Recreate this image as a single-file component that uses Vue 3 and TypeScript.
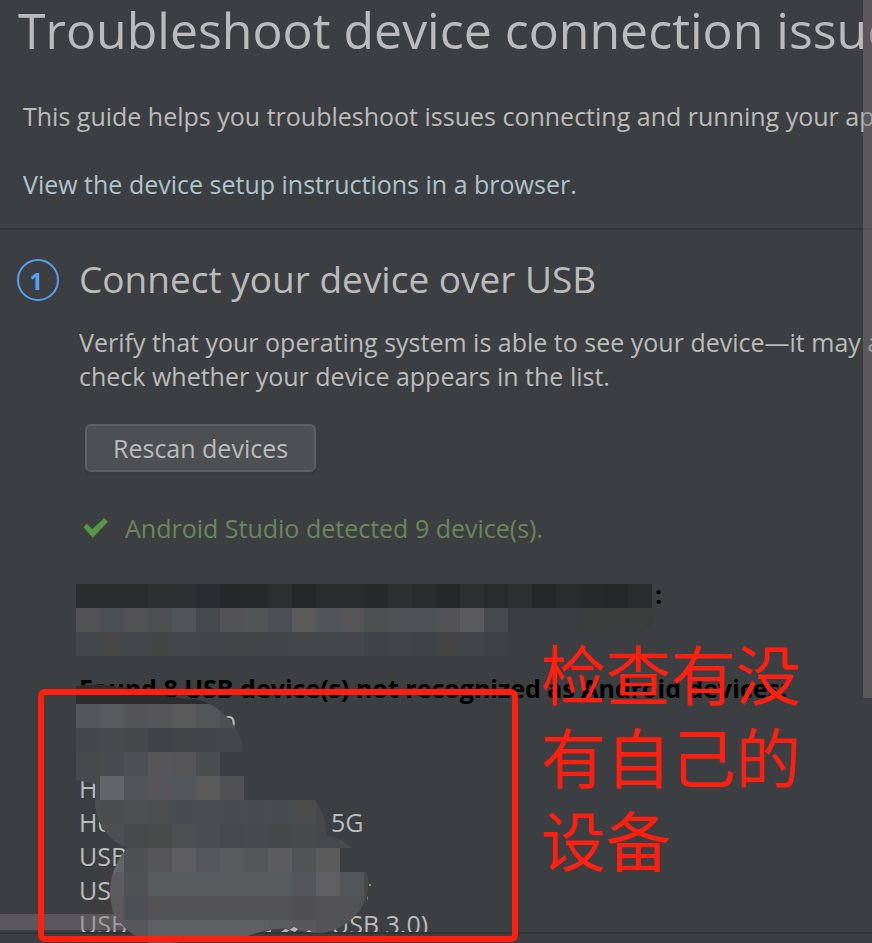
<script setup lang="ts">
interface DeviceRow {
  name: string
  gap: number
  tail: string
}

interface Cell {
  x: number
  y: number
  color: string
}

const devices: DeviceRow[] = [
  { name: '', gap: 142, tail: 'o' },
  { name: '', gap: 0, tail: '' },
  { name: 'H', gap: 0, tail: '' },
  { name: 'Ho', gap: 252, tail: '5G' },
  { name: 'USB', gap: 0, tail: '' },
  { name: 'USB', gap: 0, tail: '' },
  { name: 'USB', gap: 252, tail: 'USB 3.0)' },
]

const CELL = 24

function buildCells(left: number, top: number, rows: string[]): Cell[] {
  return rows.flatMap((row, r) =>
    row.split(' ').map((hex, c) => ({
      x: left + c * CELL,
      y: top + r * CELL,
      color: '#' + hex,
    })),
  )
}

const headingCells = buildCells(76, 584, [
  '2b2c2e 2b2c2e 2b2c2e 2e2f30 2e2f30 282c2f 262729 28292b 2d2e2f 252628 2a2b2d 2a2b2d 28292b 2e2f31 2a2c2e 252729 2d2e2f 292a2b 2d2e30 252628 292a2b 27292a 252628 2a2b2c',
  '525254 4b4f52 525254 4d4e50 505558 464a4a 535355 525556 4a4f53 5a5b59 50555a 555456 4b5050 4e5253 4e5254 525254 5b5b5d 474a4a',
  '424648 484748 434648 414543 434648 414547 424545 424546 414547 434749 434749 434749 404446 424547 404446 454445 424547 3d4142',
])

const listCells = buildCells(76, 680, [
  '2b2c2e 2b2c2e 2b2c2e 2b2c2e 2b2c2e 2b2c2e 2e2f31',
  '535759 595a5c 545456 565658 5a5a5b 535657 4e4f51',
  '434749 474a4b 454849 3f4346 424546 414547 434648',
  '474a4b 474c50 4b5054 565658 555557 494d4d',
  '474a4b 626669 50555a 565658 52575a 5a5b59 515153',
  '4d4e50 4b4c4e 4d4e50 4b4d4e 464c50 484d50 474c4e 474b4d 484c4e 4c4c4d 474849',
  '4e4f50 4e4f50 48494a 494b4b 4e4f50 4a4d50 44494b 464a4c 434849 464a4b 464849 4a4b4c',
  '646567 646567 4f5052 565658 5e5e60 54585b 5a5b5d 555658 5d5d5f 525355 5a5a5b',
  '5c5c5e 5c5c5e 505153 565b5c 565b5c 565b5c 565b5c 565b5c 565b5c 555659 606062 50565a 48494b',
  '5a5a5c 5a5a5c 4b5054 525254 525254 525254 525254 525254 525254 505052 525254 525254 48494b',
  '5a5a5c 5a5a5c 57575a 5e5f61 5e5f61 5e5f61 5e5f61 5e5f61 5b5c5e 58585a 545456 505052 48494b',
])
</script>

<template>
  <div class="window">
    <main class="viewport">
      <header class="intro">
        <h1>Troubleshoot device connection issue</h1>
        <p>This guide helps you troubleshoot issues connecting and running your app</p>
        <a href="#setup">View the device setup instructions in a browser.</a>
      </header>

      <section class="step">
        <span class="badge">1</span>
        <div class="step-body">
          <h2>Connect your device over USB</h2>
          <p>
            Verify that your operating system is able to see your device—it may a<br />
            check whether your device appears in the list.
          </p>
          <button type="button">Rescan devices</button>
          <div class="status">
            <svg width="26" height="20" viewBox="0 0 26 20" aria-hidden="true">
              <path d="M.5 9.3 3.6 5.8 9.3 11 21 .3 25 3.7 9.7 19.7Z" fill="#579642" />
            </svg>
            <span>Android Studio detected 9 device(s).</span>
          </div>
          <h3 class="recognized">:</h3>
          <h3>Found 8 USB device(s) not recognized as Android devices:</h3>
          <ul>
            <li v-for="(row, i) in devices" :key="i">
              <span :style="{ minWidth: row.gap + 'px' }">{{ row.name }}</span>
              <span>{{ row.tail }}</span>
            </li>
          </ul>
        </div>
      </section>

      <div class="scroll-y"></div>
      <div class="scroll-x"></div>
    </main>
    <footer></footer>

    <svg class="mosaic" width="872" height="943" viewBox="0 0 872 943" aria-hidden="true">
      <defs>
        <clipPath id="list-mask">
          <path
            d="M76 686Q98 683 120 687L150 692Q172 699 196 699Q216 704 230 720Q243 736 243 752H244V800H315Q326 814 327 835Q342 839 353 848H340V872H367Q372 892 360 910Q345 930 322 933Q308 933 298 930Q278 925 248 936L170 943H150Q125 934 113 912Q103 876 127 848Q99 836 95 806V784L76 780Z"
          />
        </clipPath>
      </defs>
      <path d="M580 608H652V584Q662 604 650 627Q646 632 640 632H580Z" fill="#3b3d3d" />
      <g shape-rendering="crispEdges">
        <rect
          v-for="(c, i) in headingCells"
          :key="i"
          :x="c.x"
          :y="c.y"
          width="24"
          height="24"
          :fill="c.color"
        />
      </g>
      <g clip-path="url(#list-mask)">
        <rect
          v-for="(c, i) in listCells"
          :key="i"
          :x="c.x"
          :y="c.y"
          width="24"
          height="24"
          :fill="c.color"
          shape-rendering="crispEdges"
        />
      </g>
      <path
        d="M265 932 271 930V932ZM281 932 285 929 289 930 294 927 298 929 295 932 290 930 287 932ZM306 932 309 930 312 932Z"
        fill="#b4b4b4"
      />
      <path d="M369 884H371V886H369ZM367 898 368 896V901Z" fill="#a08a70" />
    </svg>

    <div class="frame"></div>
    <p class="note">检查有没<br />有自己的<br />设备</p>
  </div>
</template>

<style>
body {
  background: #3c3f41;
}
</style>

<style scoped>
.window {
  position: relative;
  display: flex;
  flex-direction: column;
  height: 100vh;
  overflow: hidden;
  background: #3c3f41;
  color: #bbbbbb;
  font-family: 'Open Sans', 'Noto Sans', sans-serif;
  font-size: 25px;
  line-height: 34px;
}

.viewport {
  position: relative;
  flex: 1;
  min-height: 0;
  overflow: hidden;
  white-space: nowrap;
}

footer {
  flex: none;
  height: 9px;
  border-top: 2px solid #313335;
}

h1,
h2,
h3,
p,
ul {
  margin: 0;
  padding: 0;
  font-weight: 400;
}

.intro {
  display: flex;
  flex-direction: column;
  align-items: flex-start;
  padding: 0 0 27px 23px;
  border-bottom: 2px solid #323436;
}

h1 {
  margin: 0 0 39px -5px;
  font-size: 50px;
  line-height: 60px;
}

.intro p {
  margin-bottom: 34px;
}

a {
  color: #afc4cc;
  text-decoration: none;
}

.step {
  display: flex;
  gap: 20px;
  padding: 25px 0 0 17px;
}

.badge {
  flex: none;
  box-sizing: border-box;
  width: 42px;
  height: 42px;
  margin-top: 4px;
  padding-right: 4px;
  border: 2px solid #589df6;
  border-radius: 50%;
  color: #589df6;
  font-size: 24px;
  font-weight: 700;
  line-height: 40px;
  text-align: center;
}

h2 {
  margin-bottom: 22px;
  font-size: 37px;
  line-height: 48px;
}

button {
  display: block;
  height: 48px;
  margin: 31px 0 39px 6px;
  padding: 0 26px;
  border: 2px solid #5e6060;
  border-radius: 6px;
  background: #4c5052;
  box-shadow: 0 3px 1px #36393b;
  color: #bbbbbb;
  font: inherit;
}

.status {
  display: flex;
  align-items: center;
  gap: 16px;
  margin-bottom: 32px;
  padding-left: 4px;
  color: #6a8759;
}

h3 {
  height: 32px;
  color: #000000;
  font-size: 25px;
  font-weight: 700;
}

.recognized {
  height: 94px;
  padding-left: 576px;
}

ul {
  list-style: none;
}

li {
  display: flex;
  height: 34px;
}

.scroll-y {
  position: absolute;
  top: 0;
  right: 0;
  width: 9px;
  height: 698px;
  background: rgba(128, 120, 124, 0.45);
}

.scroll-x {
  position: absolute;
  bottom: 2px;
  left: 0;
  width: 130px;
  height: 16px;
  background: rgba(128, 120, 124, 0.45);
}

.mosaic {
  position: absolute;
  top: 0;
  left: 0;
}

.frame {
  position: absolute;
  top: 689px;
  left: 38px;
  box-sizing: border-box;
  width: 480px;
  height: 253px;
  border: 6px solid #ff1f11;
  border-radius: 7px;
}

.note {
  position: absolute;
  top: 631px;
  left: 541px;
  color: #ff1f11;
  font-family: 'Noto Sans CJK SC', sans-serif;
  font-size: 65px;
  line-height: 83px;
  white-space: nowrap;
}
</style>
